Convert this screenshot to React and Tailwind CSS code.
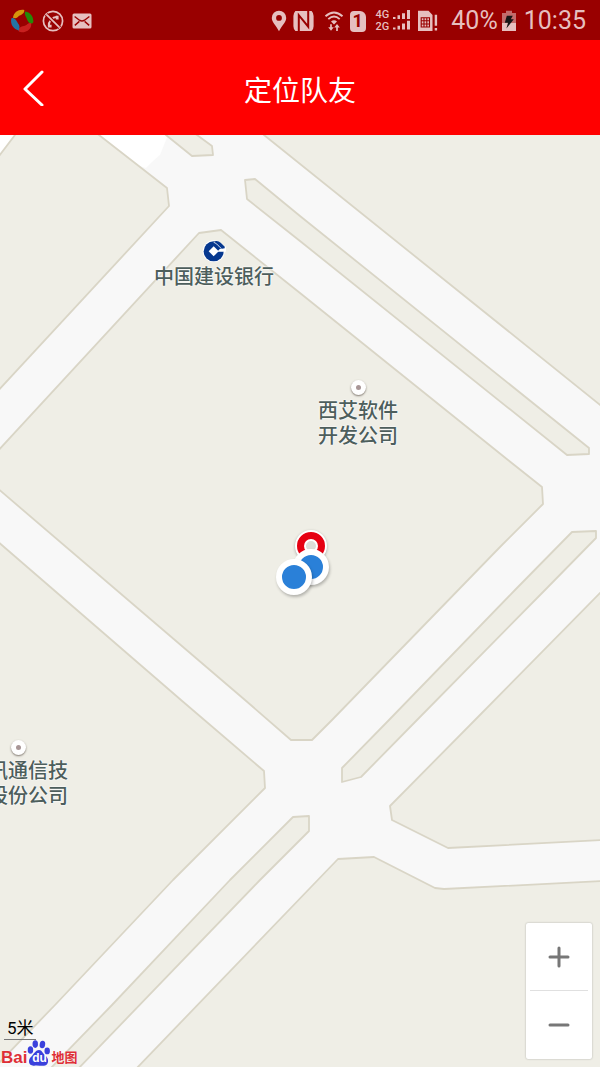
const BLOCKS = [
  '-4,160 15,135 15,131 94,131 99,135 167,188 169,206 -4,393',
  '160,130 166,135 192,156 213,155 212,146 197,135 190,130',
  '259,131 264,135 604,408 604,131',
  '245,180 255,179 300,216 589,448 589,454 567,455 300,241 247,199',
  '199,233 221,230 300,293 508,460 542,487 543,504 500,547 332,720 312,740 291,740 245,700 -4,487 -4,453',
  '-4,540 181,700 264,771 265,788 173,880 55,1005 -4,1066',
  '293,817 309,816 309,831 260,880 76,1071 48,1071 112,1005 230,880',
  '338,859 374,857 435,888 444,889 604,881 604,1071 134,1071',
  '475,720 604,589 604,840 448,848 392,820 390,806',
  '572,532 596,531 596,538 545,590 417,720 361,777 342,782 342,768 389,720 515,590',
];

function StatusBar() {
  return (
    <div className="flex h-10 items-center justify-between bg-[#990000] pt-0.5 pr-3.5 pl-2.5 text-[#e6bfbf]">
      <div className="flex items-center">
        <svg className="h-6 w-6" viewBox="30 25 74 74" aria-hidden="true">
          <path d="M39 52C42 34 57 25 74 28C75 38 66 42 58 46C52 51 50 56 39 52Z" fill="#d6960c" />
          <path d="M77 33C94 36 103 50 102 66C96 75 87 68 83 58C80 48 73 42 77 33Z" fill="#258a08" />
          <path d="M95 69C98 84 85 97 66 97C60 96 57 94 56 92C58 80 67 79 76 77C84 74 87 66 95 69Z" fill="#c8201f" />
          <path d="M34 54C44 50 48 59 54 68C60 75 61 81 57 91C42 87 30 73 34 54Z" fill="#2474a4" />
        </svg>
        <svg className="ml-2 h-[22px] w-[22px]" viewBox="0 0 22 22" fill="none" stroke="currentColor" aria-hidden="true">
          <circle cx="11" cy="11" r="9.6" strokeWidth="1.7" />
          <path d="M6.8 16.2C6.5 11.5 10 7.3 15.3 6.8" strokeWidth="2" />
          <path d="M6 16.2h3.6M15.2 5.8v3.6" strokeWidth="2.8" />
          <path d="M4.3 4.3 17.7 17.7" stroke="#990000" strokeWidth="4" />
          <path d="M4.3 4.3 17.7 17.7" strokeWidth="1.7" />
        </svg>
        <svg className="ml-2 h-4 w-5" viewBox="0 0 20 16" aria-hidden="true">
          <rect x="0.5" y="0.5" width="19" height="15" rx="1.5" fill="currentColor" />
          <path d="M2.6 3.5 7.5 7.2Q10 8.7 12.5 7.2L17.4 3.5M2.8 12.4 7.4 8.4M17.2 12.4 12.6 8.4" fill="none" stroke="#990000" strokeWidth="1.4" />
        </svg>
      </div>
      <div className="flex items-center">
        <svg className="h-[22px] w-4" viewBox="0 0 16 22" aria-hidden="true">
          <path d="M8 .7A7.2 7.2 0 0 0 .8 8C.8 12.3 5 15.2 8 21.3 11 15.2 15.2 12.3 15.2 8A7.2 7.2 0 0 0 8 .7ZM8 5a2.9 2.9 0 1 1 0 5.8A2.9 2.9 0 0 1 8 5Z" fill="currentColor" fillRule="evenodd" />
        </svg>
        <svg className="ml-1.5 h-[22px] w-[21px]" viewBox="0 0 21 22" aria-hidden="true">
          <path d="M2.4 1H18.6Q20.6 3 20.6 6V16Q20.6 19 18.6 21H2.4Q.4 19 .4 16V6Q.4 3 2.4 1Z" fill="currentColor" />
          <path d="M5.8 21V5.2L15.2 16.6V1" fill="none" stroke="#990000" strokeWidth="2" />
        </svg>
        <svg className="ml-2.5 h-[22px] w-5" viewBox="0 0 20 22" fill="none" stroke="currentColor" aria-hidden="true">
          <path d="M1.5 6.2Q10-1.4 18.5 6.2M4.3 9.1Q10 4.1 15.7 9.1" strokeWidth="1.9" />
          <path d="M7 11.6Q10 9 13 11.6L10 14.6Z" fill="currentColor" stroke="none" />
          <path d="M7 14.3V18M13 21V16.5" strokeWidth="1.7" />
          <path d="M4.2 17.2H9.8L7 20.8ZM10.2 17.6H15.8L13 14Z" fill="currentColor" stroke="none" />
        </svg>
        <span className="ml-1.5 flex h-[21px] w-4 items-center justify-center rounded-sm rounded-tr-md bg-[#e6bfbf] text-lg leading-5 font-bold text-[#990000]">1</span>
        <span className="ml-2.5 flex flex-col text-[11px] leading-[12px] font-medium">
          <span>4G</span>
          <span>2G</span>
        </span>
        <svg className="ml-1 h-[22px] w-[18px]" viewBox="0 0 18 22" fill="currentColor" aria-hidden="true">
          <path d="M0 7h2.5v2H0zM4.5 5.3H7V9H4.5zM9 3.2h3V9H9zM14 0h3v9h-3zM0 17.5h2.5v2H0zM4.5 15.8H7v3.7H4.5zM9 13.5h3v6H9zM14 10.8h3v8.7h-3z" />
        </svg>
        <svg className="ml-1.5 h-[22px] w-[22px]" viewBox="0 0 22 22" fill="currentColor" aria-hidden="true">
          <path d="M1 .7H11.5L15.5 5V21H1Z" />
          <path d="M4.2 7.8H12.5V17H4.2ZM4.2 10.8H12.5M4.2 14H12.5M7 7.8V17M9.8 7.8V17" fill="none" stroke="#990000" strokeWidth="1.1" />
          <path d="M17.7 4.8h2.4v11h-2.4zM17.7 18h2.4v2.6h-2.4z" />
        </svg>
        <span className="ml-3 text-[25px] leading-8">40%</span>
        <svg className="ml-1 h-[22px] w-3.5" viewBox="0 0 14 22" aria-hidden="true">
          <path d="M0 3H4V.8H10V3H14V21H0Z" fill="#c36b6b" />
          <path d="M0 13H14V21H0Z" fill="#e6bfbf" />
          <path d="M4.8 5.7H10.8L8.8 9.2H11.8L4.4 18.6 6 12.7H2.8Z" fill="#151515" />
        </svg>
        <span className="ml-2 text-[25px] leading-8">10:35</span>
      </div>
    </div>
  );
}

function MapDrawing() {
  return (
    <svg className="absolute inset-0 h-full w-full" viewBox="0 135 600 932" preserveAspectRatio="xMinYMin slice" aria-hidden="true">
      <rect x="0" y="135" width="600" height="932" fill="#f8f8f8" />
      <path d="M0 135H15L0 155ZM99 135H168L160 155 153 161 146 168 120 160Z" fill="#fff" />
      <g fill="#efeee6" stroke="#d9d5c6" strokeWidth="1.8" strokeLinejoin="round">
        {BLOCKS.map((points) => (
          <polygon key={points} points={points} />
        ))}
      </g>
    </svg>
  );
}

function PoiDot() {
  return (
    <span className="flex size-[15px] items-center justify-center rounded-full bg-white shadow-[0_1px_2px_rgba(80,70,60,0.7)]">
      <span className="size-[5px] rounded-full bg-[#a89696]" />
    </span>
  );
}

const LABEL =
  "text-xl leading-[25px] font-medium whitespace-nowrap text-[#4d5e5c] [text-shadow:0_0_2px_#fff,0_0_2px_#fff]";

function Teammate() {
  return <span className="block size-9 rounded-full border-6 border-white bg-[#2a80d8] shadow-[1px_2px_3px_rgba(0,0,0,0.25)]" />;
}

export default function App() {
  return (
    <div className="flex min-h-screen flex-col bg-[#f8f8f8] font-[Roboto,'Noto_Sans_CJK_SC',sans-serif]">
      <StatusBar />
      <header className="grid h-[95px] grid-cols-[64px_1fr_64px] items-center bg-[#ff0000] text-white">
        <button type="button" aria-label="返回" className="flex h-16 items-center pl-[22px]">
          <svg className="h-9 w-6" viewBox="0 0 24 36" fill="none" stroke="currentColor" strokeWidth="3" strokeLinecap="round" strokeLinejoin="round">
            <path d="M20 2 3 19 20 35" />
          </svg>
        </button>
        <h1 className="pt-2 text-center text-[28px] leading-10 font-normal">定位队友</h1>
      </header>
      <main className="relative flex-1 overflow-hidden">
        <MapDrawing />

        <div className="absolute top-[105px] left-[154px] flex flex-col items-center gap-[3px]">
          <svg className="h-[22px] w-6" viewBox="605 328 72 66" aria-hidden="true">
            <circle cx="640" cy="362" r="33" fill="#fff" />
            <circle cx="640" cy="362" r="30" fill="#06388f" />
            <path d="M652 362 661 352 680 346V363H654Z" fill="#fff" />
            <path d="M646 331Q655 330 661 336L673 348V353L661 355 640 336Z" fill="#06388f" />
            <path d="M640 335Q648 337 663 354" fill="none" stroke="#fff" strokeWidth="2.5" />
            <path d="M640 347 655 362 640 377 625 362Z" fill="#fff" />
          </svg>
          <span className={LABEL}>中国建设银行</span>
        </div>

        <div className="absolute top-[245px] left-[318px] flex flex-col items-center gap-1">
          <PoiDot />
          <span className={LABEL}>西艾软件<br />开发公司</span>
        </div>

        <div className="absolute top-[605px] -left-8 flex w-[100px] flex-col items-center gap-1">
          <PoiDot />
          <span className={`${LABEL} self-end`}>讯通信技<br />股份公司</span>
        </div>

        <span className="absolute top-[395px] left-[295px] size-8 rounded-full border-2 border-white bg-[#e60012] p-[7px] shadow-[0_1px_3px_rgba(0,0,0,0.3)]">
          <span className="block size-full rounded-full border-2 border-white bg-[#dddcd8]" />
        </span>
        <span className="absolute top-[414px] left-[293px]"><Teammate /></span>
        <span className="absolute top-[424px] left-[276px]"><Teammate /></span>

        <div className="absolute right-2 bottom-2 flex w-[66px] flex-col rounded-xs bg-white px-1 text-[#777] shadow-[0_0_2px_rgba(0,0,0,0.3)]">
          <button type="button" aria-label="放大" className="flex h-[68px] items-center justify-center border-b border-[#e0e0e0]">
            <svg className="size-6" viewBox="0 0 24 24" stroke="currentColor" strokeWidth="3" strokeLinecap="round">
              <path d="M3 12H21M12 3V21" />
            </svg>
          </button>
          <button type="button" aria-label="缩小" className="flex h-[68px] items-center justify-center">
            <svg className="size-6" viewBox="0 0 24 24" stroke="currentColor" strokeWidth="3" strokeLinecap="round">
              <path d="M3 12H21" />
            </svg>
          </button>
        </div>

        <div className="absolute bottom-0 left-0">
          <div className="ml-1 w-8 border-b border-[#777] pl-[3px] text-[17px] leading-[22px] whitespace-nowrap text-black">5米</div>
          <div className="flex h-[27px] items-end font-['Liberation_Sans','Noto_Sans_CJK_SC',sans-serif] font-bold text-[#de2f36] [text-shadow:0_0_1px_#fff]">
            <span className="pl-px text-[17px] leading-[18px]">Bai</span>
            <span className="relative flex h-7 w-6 items-end justify-center text-white">
              <svg className="absolute inset-0 h-full w-full" viewBox="82 102 70 82" fill="#3b41dc" aria-hidden="true">
                <ellipse cx="92" cy="134" rx="8" ry="11" />
                <ellipse cx="106" cy="117" rx="8" ry="11" />
                <ellipse cx="127" cy="118" rx="8" ry="11" transform="rotate(10 127 118)" />
                <ellipse cx="141" cy="137" rx="8" ry="10" />
                <path d="M117 134C126 134 128 145 136 151 146 158 148 178 132 180 124 181 110 178 103 180 86 182 84 164 93 155 101 148 106 134 117 134Z" />
              </svg>
              <span className="relative text-xs leading-[18px] [text-shadow:none]">du</span>
            </span>
            <span className="text-[13px] leading-[18px]">地图</span>
          </div>
        </div>
      </main>
    </div>
  );
}
